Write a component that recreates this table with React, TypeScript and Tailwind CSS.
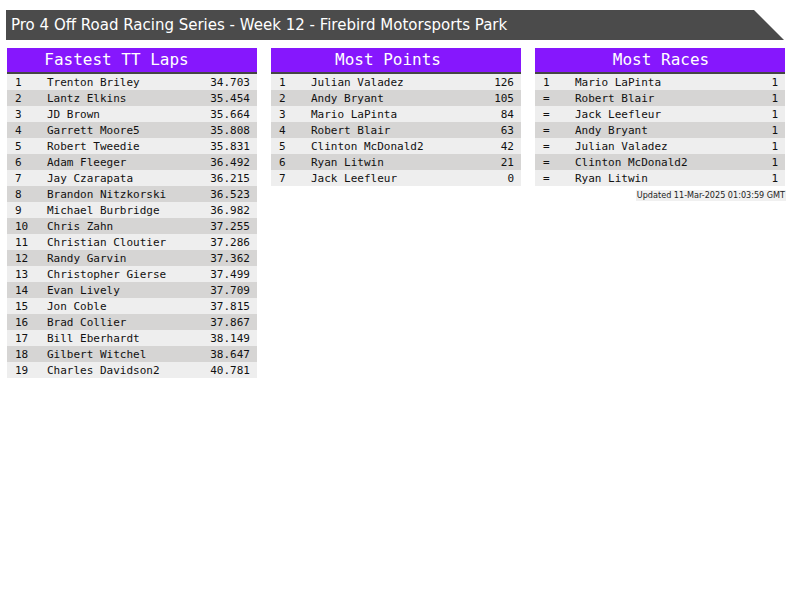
import React from "react";

type Row = { pos: string; name: string; value: string };

const laps: Row[] = [
  ["1", "Trenton Briley", "34.703"],
  ["2", "Lantz Elkins", "35.454"],
  ["3", "JD Brown", "35.664"],
  ["4", "Garrett Moore5", "35.808"],
  ["5", "Robert Tweedie", "35.831"],
  ["6", "Adam Fleeger", "36.492"],
  ["7", "Jay Czarapata", "36.215"],
  ["8", "Brandon Nitzkorski", "36.523"],
  ["9", "Michael Burbridge", "36.982"],
  ["10", "Chris Zahn", "37.255"],
  ["11", "Christian Cloutier", "37.286"],
  ["12", "Randy Garvin", "37.362"],
  ["13", "Christopher Gierse", "37.499"],
  ["14", "Evan Lively", "37.709"],
  ["15", "Jon Coble", "37.815"],
  ["16", "Brad Collier", "37.867"],
  ["17", "Bill Eberhardt", "38.149"],
  ["18", "Gilbert Witchel", "38.647"],
  ["19", "Charles Davidson2", "40.781"],
].map(([pos, name, value]) => ({ pos, name, value }));

const points: Row[] = [
  ["1", "Julian Valadez", "126"],
  ["2", "Andy Bryant", "105"],
  ["3", "Mario LaPinta", "84"],
  ["4", "Robert Blair", "63"],
  ["5", "Clinton McDonald2", "42"],
  ["6", "Ryan Litwin", "21"],
  ["7", "Jack Leefleur", "0"],
].map(([pos, name, value]) => ({ pos, name, value }));

const races: Row[] = [
  ["1", "Mario LaPinta", "1"],
  ["=", "Robert Blair", "1"],
  ["=", "Jack Leefleur", "1"],
  ["=", "Andy Bryant", "1"],
  ["=", "Julian Valadez", "1"],
  ["=", "Clinton McDonald2", "1"],
  ["=", "Ryan Litwin", "1"],
].map(([pos, name, value]) => ({ pos, name, value }));

const Board = ({ title, rows, titleClass }: { title: string; rows: Row[]; titleClass: string }) => (
  <div className="w-[250px] flex-shrink-0">
    <div
      className={`h-[26px] bg-[#8617fd] border-b-2 border-[#454545] text-white text-[16px] leading-[24px] text-center ${titleClass}`}
    >
      {title}
    </div>
    {rows.map((r, i) => (
      <div
        key={r.name}
        className={`flex h-[16px] text-[11px] leading-[15px] pt-[1px] text-[#111] pl-[8px] pr-[7px] ${
          i % 2 === 0 ? "bg-[#eeeeee]" : "bg-[#d6d5d4]"
        }`}
      >
        <span className="w-[32px]">{r.pos}</span>
        <span className="flex-1">{r.name}</span>
        <span>{r.value}</span>
      </div>
    ))}
  </div>
);

export default function App() {
  return (
    <div className="w-[800px] h-[600px] bg-white pt-[10px] pl-[6px]">
      <div className="relative w-[778px] h-[30px]">
        <svg className="absolute inset-0" width="778" height="30">
          <polygon points="0,0 748,0 778,30 0,30" fill="#4b4b4b" />
        </svg>
        <div
          className="relative pl-[5px] text-white text-[15px] leading-[30px]"
          style={{ fontFamily: '"DejaVu Sans", sans-serif' }}
        >
          Pro 4 Off Road Racing Series - Week 12 - Firebird Motorsports Park
        </div>
      </div>
      <div
        className="flex gap-[14px] pl-[1px] mt-[8px]"
        style={{ fontFamily: '"DejaVu Sans Mono", monospace' }}
      >
        <Board title="Fastest TT Laps" rows={laps} titleClass="pr-[31px]" />
        <Board title="Most Points" rows={points} titleClass="pr-[16px]" />
        <div className="flex flex-col">
          <Board title="Most Races" rows={races} titleClass="pl-[2px]" />
          <div className="flex justify-end mt-[4px] -mr-[1px]">
            <span
              className="bg-[#f0f0f0] text-[9px] leading-[11px] text-[#222] px-[1px]"
              style={{ fontFamily: '"DejaVu Sans Condensed", "Liberation Sans Narrow", sans-serif' }}
            >
              Updated 11-Mar-2025 01:03:59 GMT
            </span>
          </div>
        </div>
      </div>
    </div>
  );
}
